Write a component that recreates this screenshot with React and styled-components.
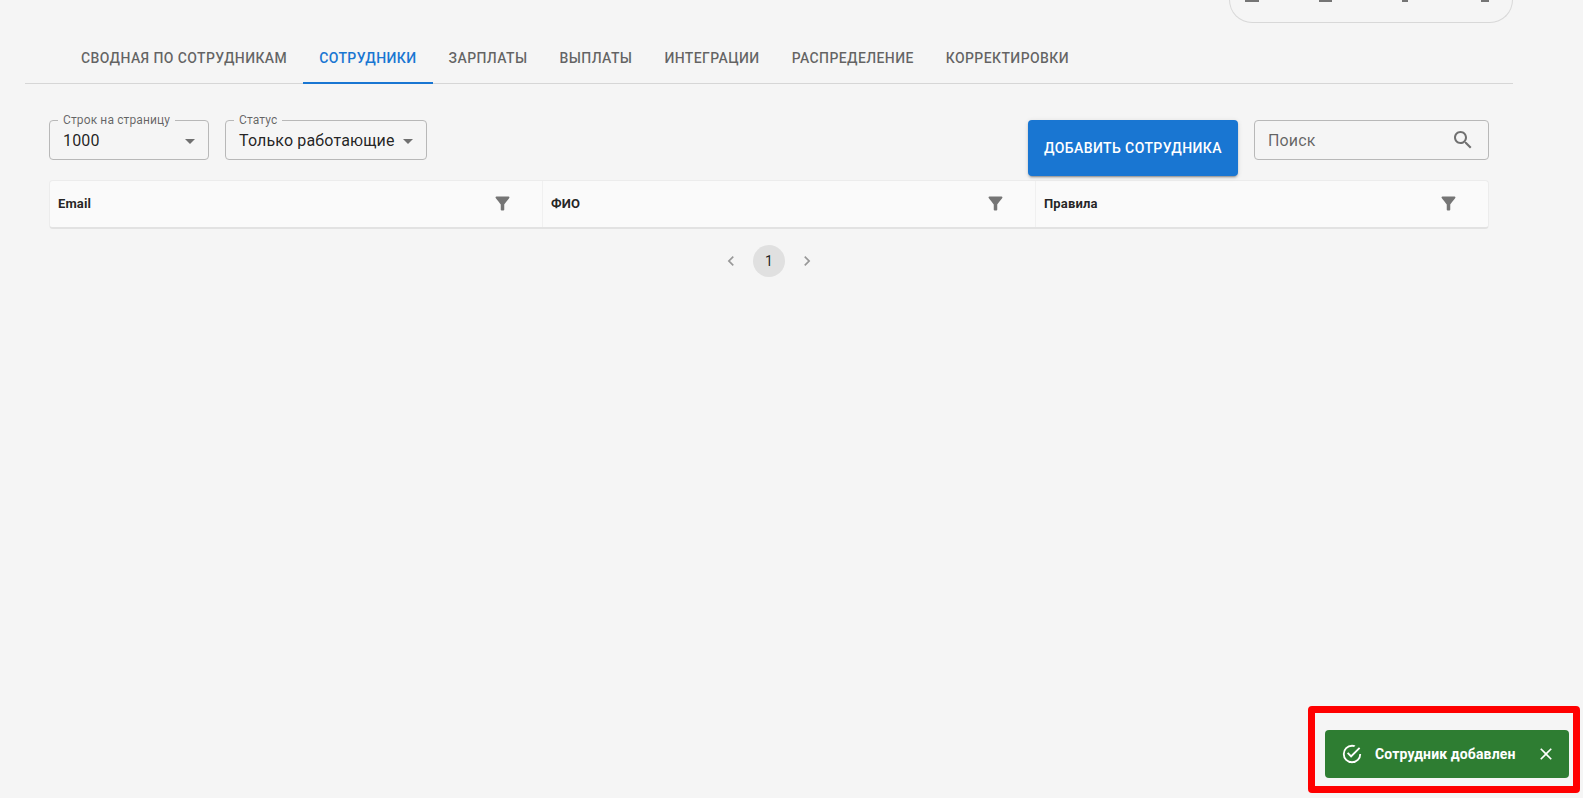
import styled, { createGlobalStyle } from "styled-components";

const GlobalStyle = createGlobalStyle`
  html, body {
    margin: 0;
    height: 100%;
    overflow: hidden;
    background: #f5f5f5;
    font-family: Roboto, "Noto Sans", sans-serif;
  }
`;

const Page = styled.div`
  position: relative;
  height: 798px;
  overflow: hidden;
  padding: 0 70px 0 25px;
  box-sizing: border-box;
`;

const TopBar = styled.div`
  display: flex;
  justify-content: flex-end;
  height: 23px;
  margin-bottom: 12px;
`;

const TopCard = styled.div`
  width: 284px;
  height: 23px;
  box-sizing: border-box;
  border: 1px solid #d8d8d8;
  border-top: none;
  border-radius: 0 0 24px 24px;
`;

const TopStub = styled.span`
  position: absolute;
  top: 0;
  left: ${(p) => p.$left}px;
  width: ${(p) => p.$width}px;
  height: 2px;
  background: #757575;
`;

const TabBar = styled.div`
  display: flex;
  padding-left: 40px;
  border-bottom: 1px solid #d6d6d6;
`;

const Tab = styled.div`
  display: flex;
  align-items: center;
  height: 49px;
  padding: 0 16px 1px;
  box-sizing: border-box;
  margin-bottom: -1px;
  border-bottom: 2px solid ${(p) => (p.$active ? "#1976d2" : "transparent")};
  font-size: 14px;
  font-weight: 500;
  letter-spacing: 0.4px;
  text-transform: uppercase;
  color: ${(p) => (p.$active ? "#1976d2" : "rgba(0, 0, 0, 0.6)")};
`;

const Content = styled.div`
  padding: 30px 24px 0;
`;

const Toolbar = styled.div`
  display: flex;
  align-items: flex-start;
  height: 62px;
  margin-bottom: 4px;
`;

const Selects = styled.div`
  display: flex;
  gap: 16px;
  flex: 1;
`;

const SelectBox = styled.fieldset`
  display: flex;
  align-items: center;
  justify-content: space-between;
  width: ${(p) => p.$width}px;
  height: 46px;
  margin: 0;
  padding: 0 6px 4px 13px;
  box-sizing: border-box;
  border: 1px solid #b8b8b8;
  border-radius: 4px;
  min-inline-size: auto;
`;

const SelectLabel = styled.legend`
  padding: 0 5px;
  margin-left: -5px;
  font-size: 12px;
  line-height: 12px;
  letter-spacing: 0.12px;
  color: rgba(0, 0, 0, 0.6);
`;

const SelectValue = styled.span`
  font-size: 16px;
  line-height: 23px;
  letter-spacing: 0.15px;
  color: rgba(0, 0, 0, 0.87);
  white-space: nowrap;
`;

const AddButton = styled.button`
  width: 210px;
  height: 56px;
  margin: 6px 16px 0 0;
  padding: 0;
  border: none;
  border-radius: 4px;
  background: #1976d2;
  color: #fff;
  font-family: inherit;
  font-size: 14px;
  font-weight: 500;
  letter-spacing: 0.4px;
  text-transform: uppercase;
  box-shadow: 0 3px 1px -2px rgba(0, 0, 0, 0.2), 0 2px 2px 0 rgba(0, 0, 0, 0.14),
    0 1px 5px 0 rgba(0, 0, 0, 0.12);
`;

const SearchBox = styled.div`
  display: flex;
  align-items: center;
  justify-content: space-between;
  width: 235px;
  height: 40px;
  margin-top: 6px;
  padding: 0 13px 0 13px;
  box-sizing: border-box;
  border: 1px solid #b8b8b8;
  border-radius: 4px;
  font-size: 16px;
  letter-spacing: 0.15px;
  color: rgba(0, 0, 0, 0.6);
`;

const Table = styled.div`
  display: grid;
  grid-template-columns: 493px 493px 452px;
  height: 49px;
  box-sizing: border-box;
  border: 1px solid #ececec;
  border-bottom: 2px solid #e2e2e2;
  border-radius: 4px;
  background: #fafafa;
`;

const HeadCell = styled.div`
  display: flex;
  align-items: center;
  justify-content: space-between;
  padding: 0 ${(p) => p.$padRight}px 1px 8px;
  border-right: ${(p) => (p.$last ? "none" : "1px solid #f0f0f0")};
  font-size: 13px;
  font-weight: 700;
  letter-spacing: 0.15px;
  color: rgba(0, 0, 0, 0.87);
`;

const Pagination = styled.div`
  display: flex;
  align-items: center;
  justify-content: center;
  gap: 6px;
  margin-top: 16px;
`;

const PageArrow = styled.div`
  display: flex;
  align-items: center;
  justify-content: center;
  width: 32px;
  height: 32px;
`;

const PageNumber = styled.div`
  display: flex;
  align-items: center;
  justify-content: center;
  width: 32px;
  height: 32px;
  border-radius: 50%;
  background: #e0e0e0;
  font-size: 14px;
  color: rgba(0, 0, 0, 0.87);
`;

const Highlight = styled.div`
  position: absolute;
  right: 3px;
  bottom: 5px;
  width: 272px;
  height: 87px;
  box-sizing: border-box;
  padding: 17px 4px 0 10px;
  border: 7px solid #ff0000;
  border-radius: 4px;
`;

const Toast = styled.div`
  display: flex;
  align-items: center;
  height: 48px;
  padding: 0 13px 0 16px;
  border-radius: 4px;
  background: #2e7d32;
  color: #fff;
  font-size: 14px;
  font-weight: 700;
  letter-spacing: 0.14px;
`;

const ToastText = styled.span`
  flex: 1;
  margin-left: 12px;
  white-space: nowrap;
`;

const Icon = ({ d, size = 24, color = "currentColor" }) => (
  <svg width={size} height={size} viewBox="0 0 24 24" fill={color}>
    <path d={d} />
  </svg>
);

const ICONS = {
  arrow: "M7 10l5 5 5-5z",
  search:
    "M15.5 14h-.79l-.28-.27C15.41 12.59 16 11.11 16 9.5 16 5.91 13.09 3 9.5 3S3 5.91 3 9.5 5.91 16 9.5 16c1.61 0 3.09-.59 4.23-1.57l.27.28v.79l5 4.99L20.49 19l-4.99-5zm-6 0C7.01 14 5 11.99 5 9.5S7.01 5 9.5 5 14 7.01 14 9.5 11.99 14 9.5 14z",
  filter:
    "M4.25 5.61C6.27 8.2 10 13 10 13v6c0 .55.45 1 1 1h2c.55 0 1-.45 1-1v-6s3.72-4.8 5.74-7.39c.51-.66.04-1.61-.79-1.61H5.04c-.83 0-1.3.95-.79 1.61z",
  left: "M15.41 7.41 14 6l-6 6 6 6 1.41-1.41L10.83 12z",
  right: "M10 6 8.59 7.41 13.17 12l-4.58 4.59L10 18l6-6z",
  success:
    "M20,12A8,8 0 0,1 12,20A8,8 0 0,1 4,12A8,8 0 0,1 12,4C12.76,4 13.5,4.11 14.2,4.31L15.77,2.74C14.61,2.26 13.34,2 12,2A10,10 0 0,0 2,12A10,10 0 0,0 12,22A10,10 0 0,0 22,12M7.91,10.08L6.5,11.5L11,16L21,6L19.59,4.58L11,13.17L7.91,10.08Z",
  close:
    "M19 6.41 17.59 5 12 10.59 6.41 5 5 6.41 10.59 12 5 17.59 6.41 19 12 13.41 17.59 19 19 17.59 13.41 12z",
};

const GREY = "rgba(0, 0, 0, 0.54)";
const LIGHT = "rgba(0, 0, 0, 0.38)";

const tabs = [
  "Сводная по сотрудникам",
  "Сотрудники",
  "Зарплаты",
  "Выплаты",
  "Интеграции",
  "Распределение",
  "Корректировки",
];

const columns = [
  { title: "Email", padRight: 29 },
  { title: "ФИО", padRight: 29 },
  { title: "Правила", padRight: 29, last: true },
];

export default function App() {
  return (
    <Page>
      <GlobalStyle />
      <TopBar>
        <TopCard />
      </TopBar>
      <TopStub $left={1245} $width={14} />
      <TopStub $left={1319} $width={13} />
      <TopStub $left={1402} $width={6} />
      <TopStub $left={1481} $width={8} />

      <TabBar>
        {tabs.map((t, i) => (
          <Tab key={t} $active={i === 1}>
            {t}
          </Tab>
        ))}
      </TabBar>

      <Content>
        <Toolbar>
          <Selects>
            <SelectBox $width={160}>
              <SelectLabel>Строк на страницу</SelectLabel>
              <SelectValue>1000</SelectValue>
              <Icon d={ICONS.arrow} color={GREY} />
            </SelectBox>
            <SelectBox $width={202}>
              <SelectLabel>Статус</SelectLabel>
              <SelectValue>Только работающие</SelectValue>
              <Icon d={ICONS.arrow} color={GREY} />
            </SelectBox>
          </Selects>
          <AddButton>Добавить сотрудника</AddButton>
          <SearchBox>
            Поиск
            <Icon d={ICONS.search} color={GREY} />
          </SearchBox>
        </Toolbar>

        <Table>
          {columns.map((c) => (
            <HeadCell key={c.title} $padRight={c.padRight} $last={c.last}>
              {c.title}
              <Icon d={ICONS.filter} size={21} color="#757575" />
            </HeadCell>
          ))}
        </Table>

        <Pagination>
          <PageArrow>
            <Icon d={ICONS.left} size={20} color={LIGHT} />
          </PageArrow>
          <PageNumber>1</PageNumber>
          <PageArrow>
            <Icon d={ICONS.right} size={20} color={LIGHT} />
          </PageArrow>
        </Pagination>
      </Content>

      <Highlight>
        <Toast>
          <Icon d={ICONS.success} size={22} />
          <ToastText>Сотрудник добавлен</ToastText>
          <Icon d={ICONS.close} size={20} />
        </Toast>
      </Highlight>
    </Page>
  );
}
